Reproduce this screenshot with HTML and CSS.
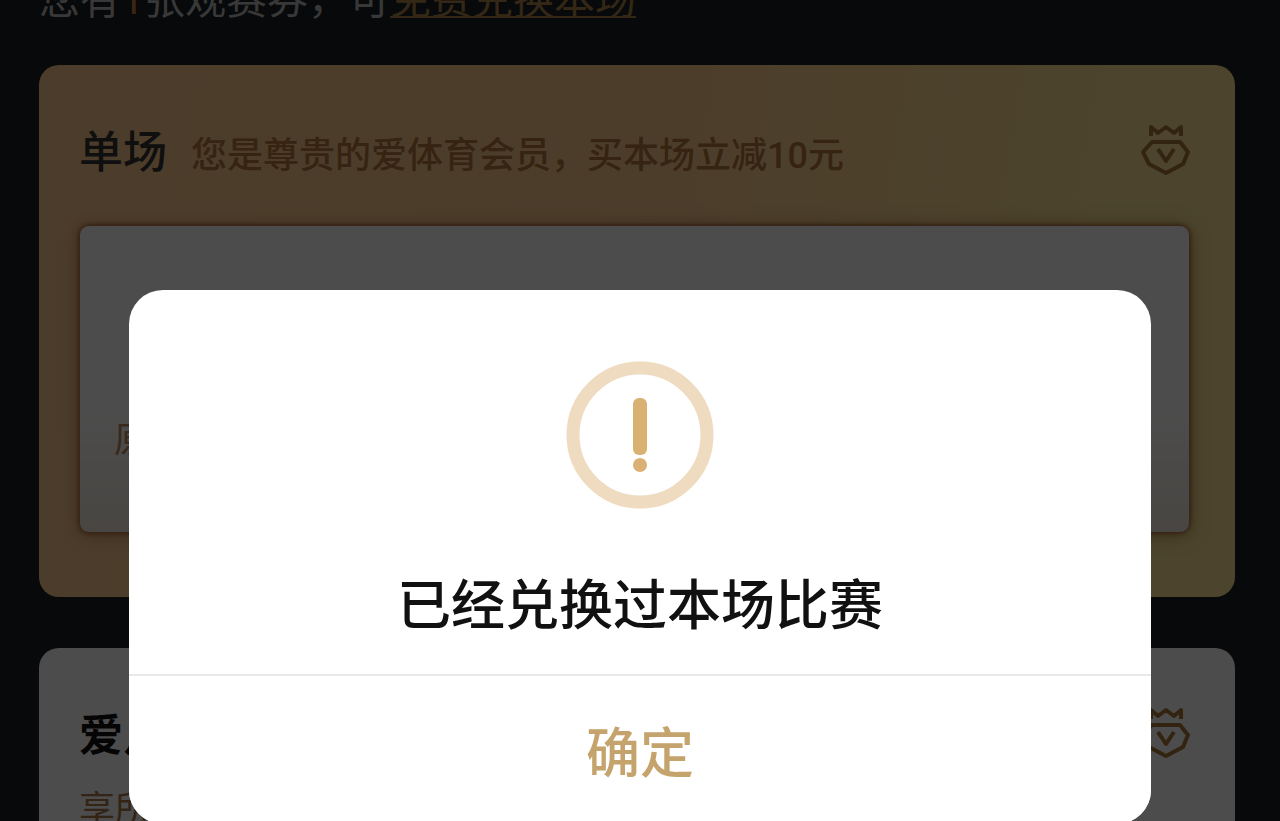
FILE: index.html
```html
<!DOCTYPE html>
<html lang="zh-CN">
<head>
  <meta charset="UTF-8" />
  <meta name="viewport" content="width=device-width, initial-scale=1.0"/>
  <title>观赛券兑换</title>
  <link rel="stylesheet" href="styles.css">
</head>
<body>
  <main class="page">
    <p class="notice"><span>您有<em>1</em>张观赛券，可<a href="#">免费兑换本场</a></span></p>

    <section class="card gold">
      <div class="card-head">
        <h2>单场</h2>
        <p class="sub">您是尊贵的爱体育会员，买本场立减10元</p>
        <svg class="badge" viewBox="0 0 50 54" aria-hidden="true">
          <path d="M11 14V5L18 11L26 5L34 11L41 5V14"/>
          <path d="M12 20H40L48 30L43 42L26 51L9 42L3 30Z"/>
          <path d="M18 27L26 39L34 27"/>
        </svg>
      </div>
      <div class="offer">
        <p class="price">原价</p>
      </div>
    </section>

    <section class="card">
      <div class="card-head">
        <h2 class="strong">爱足球</h2>
        <svg class="badge" viewBox="0 0 50 54" aria-hidden="true">
          <path d="M11 14V5L18 11L26 5L34 11L41 5V14"/>
          <path d="M12 20H40L48 30L43 42L26 51L9 42L3 30Z"/>
          <path d="M18 27L26 39L34 27"/>
        </svg>
      </div>
      <p class="perks">享所有赛事</p>
    </section>
  </main>

  <div class="overlay" id="overlay">
    <div class="modal" role="alertdialog" aria-labelledby="modalTitle">
      <svg class="warn" viewBox="0 0 148 148" aria-hidden="true">
        <circle class="ring" cx="74" cy="74" r="67"/>
        <rect x="67" y="37" width="14" height="57" rx="6"/>
        <circle cx="74" cy="104" r="7"/>
      </svg>
      <h1 id="modalTitle">已经兑换过本场比赛</h1>
      <button id="okBtn" type="button">确定</button>
    </div>
  </div>

  <script>
    document.getElementById("okBtn").addEventListener("click", () => {
      document.getElementById("overlay").hidden = true;
    });
  </script>
</body>
</html>
```
FILE: styles.css
```css
* {
  box-sizing: border-box;
}
body {
  margin: 0;
  height: 100vh;
  overflow: hidden;
  background: #1a2024;
  color: #333;
  font-family: "Noto Sans CJK SC", sans-serif;
}
h1, h2, p {
  margin: 0;
}
.page {
  padding: 0 45px 0 39px;
}
.notice {
  display: flex;
  align-items: flex-end;
  height: 28px;
  margin-bottom: 37px;
  overflow: hidden;
  color: #bbb;
  font-size: 41px;
  line-height: 56px;
}
.notice em {
  color: #c8813c;
  font-family: Roboto, sans-serif;
  font-style: normal;
}
.notice a {
  color: #b0844c;
  text-decoration-thickness: 2px;
  text-underline-offset: 2px;
}
.card {
  min-height: 532px;
  margin-bottom: 51px;
  padding: 54px 45px 64px 40px;
  border-radius: 20px;
  background: #fff;
}
.gold {
  background: linear-gradient(100deg, #ffca90, #fdcd90 50%, #fde494 85%);
}
.card-head {
  display: flex;
  align-items: center;
  gap: 24px;
  height: 60px;
}
.card-head h2 {
  font-size: 44px;
  font-weight: 500;
  line-height: 60px;
}
.card-head .strong {
  color: #111;
  font-weight: 700;
}
.sub {
  padding-top: 14px;
  color: #b4763c;
  font-family: Roboto, "Noto Sans CJK SC", sans-serif;
  font-size: 36px;
  font-weight: 500;
  line-height: 46px;
}
.badge {
  width: 50px;
  height: 54px;
  margin-left: auto;
  fill: none;
  stroke: #ac773b;
  stroke-width: 4;
  stroke-linejoin: round;
}
.offer {
  height: 308px;
  margin-top: 46px;
  padding: 186px 34px 0;
  border: 1px solid #c47c50;
  border-radius: 10px;
  background: linear-gradient(#fff 60%, #f2ebe0);
  box-shadow: 0 0 4px rgba(130, 60, 20, 0.8), 0 2px 18px rgba(130, 70, 20, 0.5);
}
.price {
  color: #c08a5c;
  font-size: 36px;
  font-weight: 400;
  line-height: 50px;
}
.perks {
  margin-top: 18px;
  color: #b07a4c;
  font-size: 36px;
  font-weight: 400;
  line-height: 52px;
}
.overlay {
  position: fixed;
  inset: 0;
  padding: 290px 129px 0;
  background: rgba(0, 0, 0, 0.7);
}
.overlay[hidden] {
  display: none;
}
.modal {
  display: flex;
  flex-direction: column;
  align-items: center;
  padding-top: 71px;
  overflow: hidden;
  border-radius: 34px;
  background: #fff;
}
.warn {
  width: 148px;
  height: 148px;
  fill: #d9b172;
}
.warn .ring {
  fill: none;
  stroke: #eedbc0;
  stroke-width: 13;
}
.modal h1 {
  margin: 53px 0 32px;
  color: #111;
  font-size: 54px;
  font-weight: 500;
  line-height: 80px;
}
.modal button {
  width: 100%;
  padding: 34px 0;
  border: 0;
  border-top: 2px solid #e8e8e8;
  background: #fff;
  color: #c5a36c;
  font-family: inherit;
  font-size: 54px;
  font-weight: 500;
  line-height: 80px;
  cursor: pointer;
}
```
